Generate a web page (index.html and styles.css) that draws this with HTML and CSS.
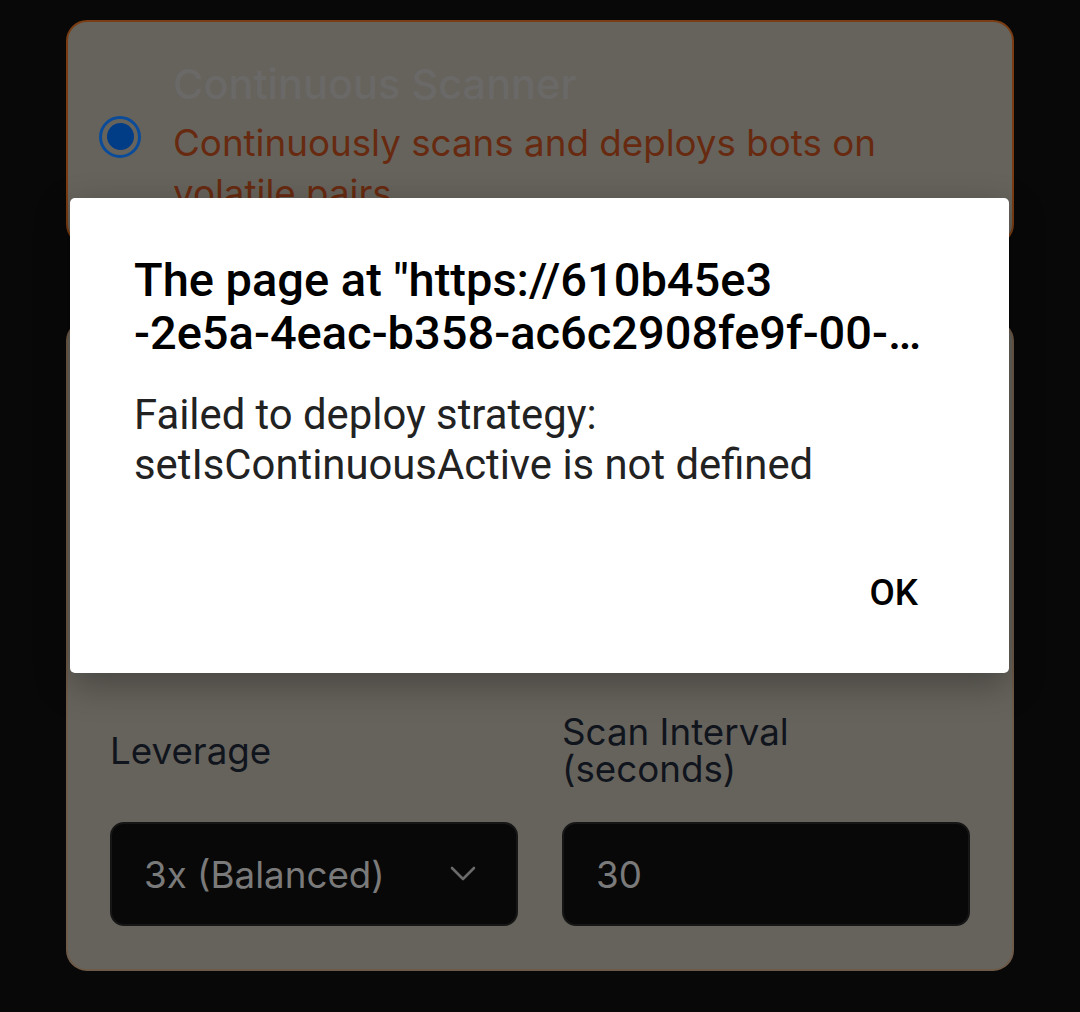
FILE: index.html
```html
<!DOCTYPE html>
<html lang="en">
<head>
<meta charset="utf-8">
<title>Continuous Scanner</title>
<link rel="stylesheet" href="styles.css">
</head>
<body>
<main class="page">
  <section class="card card-option">
    <span class="radio"><span class="radio-dot"></span></span>
    <div class="option-text">
      <div class="option-title">Continuous Scanner</div>
      <div class="option-desc">Continuously scans and deploys bots on volatile pairs</div>
    </div>
  </section>

  <section class="card card-settings">
    <div class="fields">
      <label class="field-label">Leverage</label>
      <label class="field-label">Scan Interval<br>(seconds)</label>
      <div class="control select">
        <span class="control-value">3x (Balanced)</span>
        <svg class="chevron" width="26" height="16" viewBox="0 0 26 16"><path d="M2 2 L13 13 L24 2" fill="none" stroke="#6a6a6a" stroke-width="2.6" stroke-linecap="round" stroke-linejoin="round"/></svg>
      </div>
      <div class="control">
        <span class="control-value">30</span>
      </div>
    </div>
  </section>

  <div class="dialog" role="alertdialog">
    <div class="dialog-title">The page at "https://610b45e3<br>-2e5a-4eac-b358-ac6c2908fe9f-00-…</div>
    <div class="dialog-msg">Failed to deploy strategy:<br>setIsContinuousActive is not defined</div>
    <div class="dialog-actions">
      <button class="dialog-btn">OK</button>
    </div>
  </div>
</main>
</body>
</html>
```

FILE: styles.css
```css
* { box-sizing: border-box; }
html, body { margin: 0; padding: 0; }
body {
  background: #080808;
  width: 1080px;
  height: 1012px;
  overflow: hidden;
  font-family: Inter, "Noto Sans", sans-serif;
}
.page {
  position: relative;
  padding: 20px 66px 0 66px;
  display: flex;
  flex-direction: column;
  gap: 75px;
}
.card {
  background: #66635c;
  border: 2.6px solid #7a3c12;
  border-radius: 21px;
}
.card-option {
  height: 225px;
  display: flex;
  align-items: center;
  gap: 32px;
  padding: 0 32px 0 31px;
}
.radio {
  flex: none;
  width: 42px;
  height: 42px;
  border-radius: 50%;
  border: 3px solid #0b4c9a;
  display: flex;
  align-items: center;
  justify-content: center;
  margin-top: 8px;
}
.radio-dot {
  width: 27px;
  height: 27px;
  border-radius: 50%;
  background: #003d86;
}
.option-text {
  display: flex;
  flex-direction: column;
  gap: 8px;
  margin-top: 11px;
}
.option-title {
  font-size: 41.5px;
  font-weight: 500;
  line-height: 52px;
  color: #6a6968;
}
.option-desc {
  font-size: 36.75px;
  line-height: 50px;
  color: #672a10;
  max-width: 720px;
}
.card-settings {
  height: 651px;
  border-color: #6e5a48;
  padding: 391px 42px 0 42px;
}
.fields {
  display: grid;
  grid-template-columns: 1fr 1fr;
  column-gap: 44px;
  row-gap: 35px;
  align-items: center;
}
.field-label {
  font-size: 36.75px;
  line-height: 37px;
  color: #10141c;
}
.control {
  height: 104px;
  background: #080808;
  border: 2.6px solid #161616;
  border-radius: 14px;
  display: flex;
  align-items: center;
  justify-content: space-between;
  padding: 0 40px 0 32px;
}
.control-value {
  font-size: 36.75px;
  color: #7a7a7a;
}
.chevron { display: block; }
.dialog {
  position: absolute;
  left: 70px;
  top: 198px;
  width: 939px;
  height: 475px;
  background: #ffffff;
  border-radius: 5px;
  box-shadow: 0 12px 36px rgba(0,0,0,0.3);
  padding: 55px 64px 0 64px;
  font-family: Roboto, "Noto Sans", sans-serif;
  display: flex;
  flex-direction: column;
}
.dialog-title {
  font-size: 47px;
  font-weight: 500;
  line-height: 53px;
  color: #000000;
  white-space: nowrap;
}
.dialog-msg {
  margin-top: 31px;
  font-size: 41.8px;
  line-height: 50px;
  color: #222222;
}
.dialog-actions {
  margin-top: 78px;
  display: flex;
  justify-content: flex-end;
}
.dialog-btn {
  background: none;
  border: none;
  padding: 0 27px 0 20px;
  font-family: Roboto, sans-serif;
  font-size: 36.75px;
  font-weight: 500;
  line-height: 50px;
  color: #000000;
}
```
